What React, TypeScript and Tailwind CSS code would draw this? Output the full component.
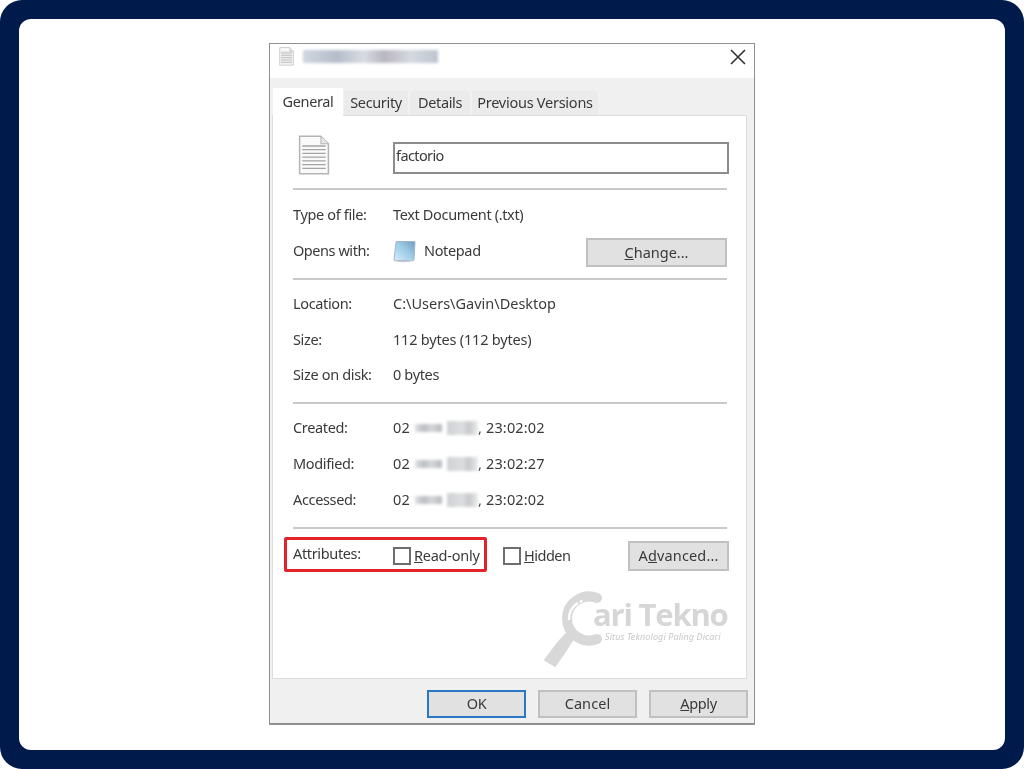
import type { FC, ReactNode } from "react";

const FONT = "font-['Noto_Sans','Open_Sans',sans-serif]";

const Smudge: FC<{ className: string }> = ({ className }) => (
  <span className={`inline-block blur-[1.5px] ${className}`} />
);

const Row: FC<{ label: string; children: ReactNode; height?: string }> = ({ label, children, height = "h-[36px]" }) => (
  <div className={`flex items-center ${height}`}>
    <div className="w-[100px] shrink-0">{label}</div>
    <div className="flex items-center">{children}</div>
  </div>
);

const Separator = ({ className }: { className: string }) => <div className={`h-[2px] bg-[#c9c9c9] ${className}`} />;

const DocIcon = ({ size = 32 }: { size?: number }) => (
  <svg width={size} height={size * 1.25} viewBox="0 0 30 37" fill="none">
    <path d="M1.500 1h20l7 7v28h-27z" fill="#fafafa" stroke="#b5b5b5" strokeWidth="1.4" />
    <path d="M21.500 1v7h7" fill="#e6e6e6" stroke="#b5b5b5" />
    <path d="M4 10h22M4 13.500h22M4 17h22M4 20.500h22M4 24h22M4 27.500h22M4 31h22" stroke="#a4a4a4" strokeWidth="1.3" />
  </svg>
);

const NotepadIcon = () => (
  <svg width="23" height="23" viewBox="0 0 23 23">
    <defs>
      <linearGradient id="pad" x1="0" y1="1" x2="1" y2="0">
        <stop offset="0" stopColor="#d6ecf8" />
        <stop offset="0.55" stopColor="#9ccbe8" />
        <stop offset="1" stopColor="#6f9cbc" />
      </linearGradient>
    </defs>
    <path d="M4 1.500h17q1 0 1 1l-1 17q0 1-1 1H2q-1 0-1-1L3 2.500q0-1 1-1z" fill="url(#pad)" stroke="#9db7c9" />
    <path d="M1.500 20.500q8 2 19 0" stroke="#c5ccd2" strokeWidth="1.500" fill="none" />
  </svg>
);

const DateValue = ({ time }: { time: string }) => (
  <>
    <span className="tracking-[0.2px]">02</span>
    <Smudge className="ml-[5px] h-[8px] w-[27px] bg-[linear-gradient(90deg,#dfe1e3,#b9bdc2_35%,#d5d7da_60%,#b5b9be)]" />
    <Smudge className="ml-[5px] h-[14px] w-[31px] bg-[linear-gradient(90deg,#cfd2d4,#dcdee0_50%,#c6c8cb_70%,#eceded)]" />
    <span className="tracking-[0.15px]">, {time}</span>
  </>
);

const DialogButton: FC<{ children: ReactNode; className: string }> = ({ children, className }) => (
  <button className={`flex items-center justify-center border-2 bg-[#e1e1e1] ${className}`}>{children}</button>
);

const Checkbox = () => <span className="block h-[18px] w-[18px] border-2 border-[#6d6d6d] bg-white" />;

const Watermark = () => (
  <div className="absolute left-[274px] top-[545px] h-[85px] w-[190px]">
    <svg className="absolute left-0 top-0" width="84" height="82" viewBox="0 0 84 82" fill="none">
      <path d="M53 9A22 22 0 1 0 53 50" stroke="#d8d8d8" strokeWidth="10" strokeLinecap="round" />
      <path d="M25 30A19 19 0 0 1 38 12" stroke="#ffffff" strokeWidth="2.500" strokeLinecap="round" strokeDasharray="18 4 1 40" />
      <path d="M1 71 11 77 20 64 29 50 22 45 13 55z" fill="#d8d8d8" stroke="#d8d8d8" strokeWidth="2" strokeLinejoin="round" />
    </svg>
    <span className="absolute left-[49px] top-[9px] whitespace-nowrap font-['Open_Sans',sans-serif] text-[31px] font-bold leading-[32px] tracking-[-1.2px] text-[#d6d6d6]">ari Tekno</span>
    <span className="absolute left-[61px] top-[43px] whitespace-nowrap text-[9px] italic leading-[10px] tracking-[0.1px] text-[#c8c8c8]">Situs Teknologi Paling Dicari</span>
  </div>
);

export default function App() {
  return (
    <div className={`h-[769px] w-[1024px] overflow-hidden bg-white ${FONT}`}>
      <div className="h-full rounded-[22px] bg-[#001a4b] p-[19px]">
        <div className="relative flex h-full justify-center rounded-[12px] bg-white pt-[24px]">
          <div className="relative h-[682px] w-[486px] border border-b-2 border-[#8f8f8f] bg-[#f0f0f0] text-[14.5px] tracking-[-0.35px] text-[#3a3a3a] blur-[0.6px]">
            {/* Title bar */}
            <div className="flex h-[34px] items-start bg-white pl-[9px] pr-[8px] pt-[3px]">
              <DocIcon size={15} />
              <Smudge className="ml-[9px] mt-[3px] h-[13px] w-[135px] bg-[linear-gradient(90deg,#cfd6df,#b4bdca_25%,#d8dbe2_45%,#b8b6c2_60%,#d5d9e0_80%,#bcc4cf)]" />
              <svg className="ml-auto mt-[2px]" width="16" height="16" viewBox="0 0 16 16">
                <path d="M1 1l14 14M15 1 1 15" stroke="#333" strokeWidth="1.6" />
              </svg>
            </div>

            {/* Tabs */}
            <div className="flex h-[37px] items-end pl-[3px]">
              <div className="z-10 -mb-[1px] flex h-[28px] w-[70px] items-center justify-center bg-white">General</div>
              <div className="ml-[1px] flex h-[24px] w-[64px] items-center justify-center bg-[#ebebeb]">Security</div>
              <div className="ml-[2px] flex h-[24px] w-[60px] items-center justify-center bg-[#ebebeb]">Details</div>
              <div className="ml-[2px] flex h-[24px] w-[126px] items-center justify-center bg-[#ebebeb] tracking-[-0.25px]">Previous Versions</div>
            </div>

            {/* General tab */}
            <div className="ml-[2px] h-[564px] w-[475px] border border-[#dcdcdc] bg-white pl-[20px] pr-[19px] pt-[19px]">
              <div className="flex h-[40px] items-center">
                <div className="w-[100px] pl-[5px]">
                  <DocIcon />
                </div>
                <div className="-mr-[2px] mt-[5px] flex h-[32px] flex-1 items-center border-2 border-[#8c8c8c] pb-[3px] pl-[1px] tracking-[-0.6px]">factorio</div>
              </div>
              <Separator className="mt-[13px]" />

              <div className="mt-[7px]">
                <Row label="Type of file:">Text Document (.txt)</Row>
                <div className="flex h-[36px] items-center">
                  <div className="w-[100px] tracking-[-0.45px]">Opens with:</div>
                  <NotepadIcon />
                  <span className="ml-[8px]">Notepad</span>
                  <DialogButton className="ml-auto mt-[3px] h-[29px] w-[141px] border-[#c0c0c0] pt-[1px] tracking-[0px]">
                    <span><u>C</u>hange...</span>
                  </DialogButton>
                </div>
              </div>
              <Separator className="mt-[9px]" />

              <div className="mt-[6px]">
                <Row label="Location:"><span className="tracking-[0px]">C:\Users\Gavin\Desktop</span></Row>
                <Row label="Size:"><span className="tracking-[-0.2px]">112 bytes (112 bytes)</span></Row>
                <Row label="Size on disk:" height="h-[34px]">
                  <span>0 bytes</span>
                </Row>
              </div>
              <Separator className="mt-[10px]" />

              <div className="mt-[6px]">
                <Row label="Created:"><DateValue time="23:02:02" /></Row>
                <Row label="Modified:"><DateValue time="23:02:27" /></Row>
                <Row label="Accessed:" height="h-[35px]"><DateValue time="23:02:02" /></Row>
              </div>
              <Separator className="mt-[10px]" />

              <div className="mt-[9px] flex h-[36px] items-center">
                <div className="w-[100px] -translate-y-[2px]">Attributes:</div>
                <Checkbox />
                <span className="ml-[3px] w-[89px] tracking-[-0.25px]"><u>R</u>ead-only</span>
                <Checkbox />
                <span className="ml-[3px] tracking-[-0.5px]"><u>H</u>idden</span>
                <DialogButton className="-mr-[2px] ml-auto h-[30px] w-[101px] border-[#c0c0c0] tracking-[0.15px]">
                  <span>A<u>d</u>vanced...</span>
                </DialogButton>
              </div>
            </div>

            {/* Footer buttons */}
            <div className="flex justify-end gap-[12px] pr-[6px] pt-[11px]">
              <DialogButton className="h-[28px] w-[99px] border-[#2a78c4]">OK</DialogButton>
              <DialogButton className="h-[28px] w-[99px] border-[#c0c0c0] tracking-[0.1px]">Cancel</DialogButton>
              <DialogButton className="h-[28px] w-[99px] border-[#c0c0c0]"><span><u>A</u>pply</span></DialogButton>
            </div>

            <Watermark />
          </div>
          {/* Red highlight */}
          <div className="absolute left-[265px] top-[518px] h-[35px] w-[203px] rounded-[2px] border-[3px] border-[#e3222b] blur-[0.4px]" />
        </div>
      </div>
    </div>
  );
}
